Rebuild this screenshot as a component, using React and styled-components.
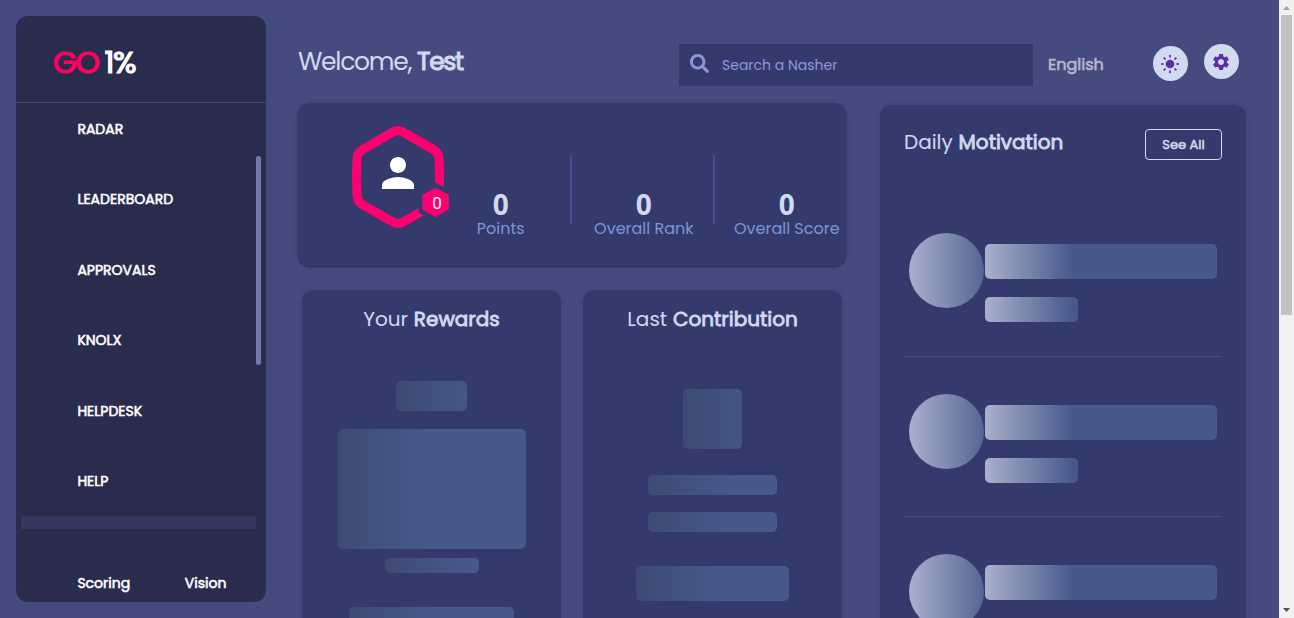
import React from "react";
import styled, { createGlobalStyle } from "styled-components";
import { MdPerson, MdSettings } from "react-icons/md";
import { FaSearch } from "react-icons/fa";

const GlobalStyle = createGlobalStyle`
  * { box-sizing: border-box; }
  body {
    margin: 0;
    overflow: hidden;
    background: #454a7f;
    font-family: Poppins, Inter, "Open Sans", sans-serif;
    color: #d1daf1;
  }
`;

const Page = styled.div`
  display: flex;
  width: 1294px;
  height: 618px;
  overflow: hidden;
`;

const Text = styled.span`
  display: block;
  white-space: nowrap;
  font-size: ${(p) => p.$size}px;
  line-height: ${(p) => p.$line || 24}px;
  font-weight: 400;
  letter-spacing: ${(p) => p.$track || 0}px;
  color: ${(p) => p.$color || "#d1daf1"};
  -webkit-text-stroke: ${(p) => (p.$strong ? "0.04em" : "0")};
`;

const Bold = styled.b`
  margin-left: 0.5px;
  font-weight: 400;
  -webkit-text-stroke: 0.042em;
`;

/* Sidebar */
const Sidebar = styled.nav`
  flex: none;
  display: flex;
  flex-direction: column;
  width: 250px;
  height: 586px;
  margin: 16px 0 0 16px;
  border-radius: 12px;
  background: #2a2c4e;
`;

const Brand = styled.div`
  display: flex;
  align-items: center;
  gap: 6px;
  height: 87px;
  padding: 6px 0 0 37px;
  border-bottom: 1px solid #4b4c69;
`;

const MenuArea = styled.div`
  display: flex;
  height: 413px;
  padding: 0 5px;
`;

const Menu = styled.ul`
  width: 235px;
  margin: 0;
  padding: 14px 0 0 56.4px;
  list-style: none;
`;

const MenuItem = styled.li`
  height: 70.4px;
`;

const MenuThumb = styled.div`
  width: 5px;
  height: 209px;
  margin-top: 53px;
  border-radius: 3px;
  background: #747ab0;
`;

const MenuTrack = styled.div`
  width: 235px;
  height: 13px;
  margin-left: 5px;
  background: #363661;
`;

const SidebarFooter = styled.div`
  display: flex;
  justify-content: space-between;
  padding: 42px 39.6px 0 61.4px;
`;

/* Main area */
const Main = styled.main`
  flex: none;
  width: 980px;
  margin-left: 32px;
`;

const Header = styled.header`
  display: flex;
  align-items: flex-start;
  height: 103px;
`;

const Greeting = styled.div`
  width: 381px;
  padding-top: 44px;
`;

const Search = styled.div`
  display: flex;
  align-items: center;
  gap: 13px;
  width: 354px;
  height: 42px;
  margin: 44px 15px 0 0;
  padding-left: 11px;
  color: #8c98dc;
  background: #353a6d;
  svg { margin-top: -3px; }
`;

const Language = styled.div`
  width: 105px;
  padding-top: 53px;
`;

const RoundButton = styled.button`
  display: flex;
  align-items: center;
  padding: 0 0 0 ${(p) => p.$inset}px;
  width: 35px;
  height: 35px;
  margin: ${(p) => p.$top}px 16px 0 0;
  border: 0;
  border-radius: 50%;
  color: #5a2ea6;
  background: #d1daf1;
  svg { flex: none; }
`;

const Columns = styled.div`
  display: flex;
  align-items: flex-start;
  gap: 34px;
`;

const Left = styled.div`
  width: 548px;
`;

const StatsCard = styled.section`
  display: flex;
  height: 163px;
  border-radius: 12px;
  background: #353a6d;
  box-shadow: 0 1px 2px rgba(30, 32, 66, 0.7), 0 0 5px rgba(38, 40, 76, 0.15);
`;

const AvatarBox = styled.div`
  flex: none;
  width: 131px;
  padding: 20px 0 0 48px;
`;

const Avatar = styled.div`
  position: relative;
  width: 108px;
  height: 108px;
  svg { display: block; }
`;

const PersonMark = styled(MdPerson)`
  position: absolute;
  left: 28px;
  top: 26px;
  color: #fff;
`;

const BadgeCount = styled.span`
  position: absolute;
  left: 77px;
  top: 69px;
  width: 28px;
  text-align: center;
  font: 17px/22px Roboto, sans-serif;
  color: #fff;
`;

const Stat = styled.div`
  flex: none;
  display: flex;
  flex-direction: column;
  align-items: center;
  justify-content: flex-end;
  width: ${(p) => (p.$last ? 141 : 143)}px;
  height: 69px;
  margin-top: 52px;
  border-right: ${(p) => (p.$last ? "0" : "2px solid #484c97")};
`;

const StatBody = styled.div`
  display: flex;
  flex-direction: column;
  align-items: center;
  margin-bottom: -17px;
  padding-left: 2.6px;
`;

const StatValue = styled.span`
  font: 700 28px/26px "Noto Sans", sans-serif;
  color: #d1daf1;
`;

const Panels = styled.div`
  display: flex;
  gap: 22px;
  padding: 24px 4px 0;
`;

const Panel = styled.section`
  display: flex;
  flex-direction: column;
  align-items: center;
  width: 259px;
  height: 345px;
  padding-top: 13px;
  border-radius: 12px;
  background: #353a6d;
  box-shadow: 0 0 5px rgba(38, 40, 76, 0.2);
`;

const Skeleton = styled.div`
  flex: none;
  width: ${(p) => p.$w}px;
  height: ${(p) => p.$h}px;
  margin-top: ${(p) => p.$mt || 0}px;
  border-radius: ${(p) => (p.$round ? "50%" : "5px")};
  background: ${(p) =>
    p.$bright
      ? "linear-gradient(90deg, #a9b1cd 0, #47598b 87px)"
      : "linear-gradient(90deg, #3d4b74 0, #47598b 84px)"};
`;

const Motivation = styled.section`
  width: 366px;
  height: 560px;
  margin-top: 2px;
  padding: 24px 24px 0;
  border-radius: 12px;
  background: #353a6d;
  box-shadow: 0 0 5px rgba(38, 40, 76, 0.2);
`;

const MotivationHead = styled.div`
  display: flex;
  justify-content: space-between;
  height: 67.4px;
`;

const SeeAll = styled.button`
  display: grid;
  place-items: center;
  width: 77px;
  height: 31px;
  padding: 0;
  border: 1px solid #d1daf1;
  border-radius: 4px;
  background: transparent;
  font-family: inherit;
`;

const Post = styled.div`
  display: flex;
  gap: 1px;
  height: 160.5px;
  padding: 36.7px 0 0 5px;
  border-bottom: 1px solid #494c77;
`;

const PostLines = styled.div`
  padding-top: 11px;
`;

/* Window scrollbar */
const ScrollTrack = styled.div`
  flex: none;
  display: flex;
  flex-direction: column;
  align-items: center;
  width: 15px;
  height: 618px;
  margin-left: 1px;
  background: #f1f1f1;
`;

const ScrollThumb = styled.div`
  width: 11px;
  height: 300px;
  margin-bottom: 287px;
  background: #c1c1c1;
`;

const Arrow = ({ down }) => (
  <svg width="15" height="15" viewBox="0 0 15 15">
    <path d={down ? "M4 6h7L7.5 10z" : "M4 10h7L7.5 6z"} fill={down ? "#505050" : "#a3a3a3"} />
  </svg>
);

const Sun = () => (
  <svg width="18" height="18" viewBox="-9 -9 18 18">
    <circle r="4.3" fill="#5a2ea6" />
    {[0, 45, 90, 135, 180, 225, 270, 315].map((a) => (
      <path key={a} d="M0-6.4V-9" stroke="#5a2ea6" strokeWidth="1.7" transform={`rotate(${a})`} />
    ))}
  </svg>
);

const HexAvatar = () => (
  <Avatar>
    <svg width="108" height="108" viewBox="0 0 108 108">
      <path
        d="M48 8.500Q52 6.500 56 8.500L86.500 26Q92.800 29.500 93 36Q94.200 54 93 72Q92.800 79 86.500 82.300L56 99.500Q52 101.500 48 99.500L17.500 82.300Q11.200 79 11 72Q9.800 54 11 36Q11.200 29.500 17.500 26Z"
        fill="none"
        stroke="#ff0070"
        strokeWidth="9"
        strokeLinejoin="round"
      />
      <path d="M89.500 61L107 71V91L89.500 101L74 92Q72.500 91 72.500 89V71Z" transform="translate(0 -1.500)" fill="#353a6d" />
      <path
        d="M89.500 66L101.500 72.700V86L89.500 92.700L77.500 86V72.700Z"
        fill="#ff0070"
        stroke="#ff0070"
        strokeWidth="2.500"
        strokeLinejoin="round"
      />
    </svg>
    <PersonMark size={48} />
    <BadgeCount>0</BadgeCount>
  </Avatar>
);

const menu = ["RADAR", "LEADERBOARD", "APPROVALS", "KNOLX", "HELPDESK", "HELP"];

const stats = [
  ["Points", 0],
  ["Overall Rank", 0],
  ["Overall Score", 0],
];

export default function App() {
  return (
    <Page>
      <GlobalStyle />
      <Sidebar>
        <Brand>
          <Text $size={31} $line={40} $track={-1.5} $strong $color="#ff0060">GO</Text>
          <Text $size={31} $line={40} $track={-1.5} $strong $color="#fff">1%</Text>
        </Brand>
        <MenuArea>
          <Menu>
            {menu.map((label) => (
              <MenuItem key={label}>
                <Text $size={14} $strong $color="#fff">{label}</Text>
              </MenuItem>
            ))}
          </Menu>
          <MenuThumb />
        </MenuArea>
        <MenuTrack />
        <SidebarFooter>
          <Text $size={14} $strong $color="#fff">Scoring</Text>
          <Text $size={14} $strong $color="#fff">Vision</Text>
        </SidebarFooter>
      </Sidebar>

      <Main>
        <Header>
          <Greeting>
            <Text $size={25} $line={36} $track={-1.3}>
              Welcome, <Bold>Test</Bold>
            </Text>
          </Greeting>
          <Search>
            <FaSearch size={19} />
            <Text $size={14} $color="#8c98dc">Search a Nasher</Text>
          </Search>
          <Language>
            <Text $size={16} $strong $color="#b5b6ce">English</Text>
          </Language>
          <RoundButton $top={46} $inset={8}><Sun /></RoundButton>
          <RoundButton $top={44} $inset={7}><MdSettings size={20} /></RoundButton>
        </Header>

        <Columns>
          <Left>
            <StatsCard>
              <AvatarBox><HexAvatar /></AvatarBox>
              {stats.map(([label, value], i) => (
                <Stat key={label} $last={i === stats.length - 1}>
                  <StatBody>
                    <StatValue>{value}</StatValue>
                    <Text $size={16} $color="#7b95d4">{label}</Text>
                  </StatBody>
                </Stat>
              ))}
            </StatsCard>
            <Panels>
              <Panel>
                <Text $size={20} $line={32}>Your <Bold>Rewards</Bold></Text>
                <Skeleton $w={71} $h={30} $mt={46} />
                <Skeleton $w={188} $h={120} $mt={18} />
                <Skeleton $w={94} $h={15} $mt={9} />
                <Skeleton $w={165} $h={40} $mt={34} />
              </Panel>
              <Panel>
                <Text $size={20} $line={32}>Last <Bold>Contribution</Bold></Text>
                <Skeleton $w={59} $h={60} $mt={54} />
                <Skeleton $w={129} $h={20} $mt={26} />
                <Skeleton $w={129} $h={20} $mt={17} />
                <Skeleton $w={153} $h={35} $mt={34} />
              </Panel>
            </Panels>
          </Left>

          <Motivation>
            <MotivationHead>
              <Text $size={20} $line={26}>Daily <Bold>Motivation</Bold></Text>
              <SeeAll><Text $size={13} $strong>See All</Text></SeeAll>
            </MotivationHead>
            {[0, 1, 2].map((n) => (
              <Post key={n}>
                <Skeleton $w={75} $h={75} $round $bright />
                <PostLines>
                  <Skeleton $w={232} $h={35} $bright />
                  <Skeleton $w={93} $h={25} $mt={18} $bright />
                </PostLines>
              </Post>
            ))}
          </Motivation>
        </Columns>
      </Main>

      <ScrollTrack>
        <Arrow />
        <ScrollThumb />
        <Arrow down />
      </ScrollTrack>
    </Page>
  );
}
